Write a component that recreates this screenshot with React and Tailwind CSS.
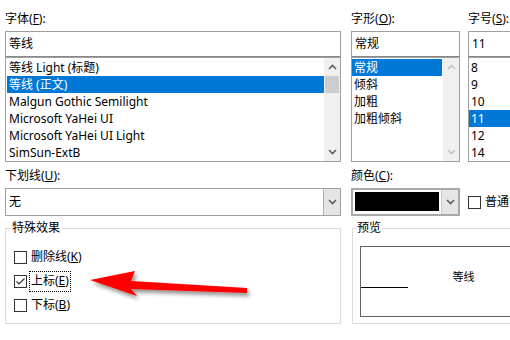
const fontList = [
	"等线 Light (标题)",
	"等线 (正文)",
	"Malgun Gothic Semilight",
	"Microsoft YaHei UI",
	"Microsoft YaHei UI Light",
	"SimSun-ExtB",
];
const styleList = ["常规", "倾斜", "加粗", "加粗倾斜"];
const sizeList = ["8", "9", "10", "11", "12", "14"];

function Chevron({ up = false, color = "#606060" }) {
	return (
		<svg width="9" height="6" viewBox="0 0 9 6">
			<polyline
				points={up ? "1,5 4.5,1.5 8,5" : "1,1 4.5,4.5 8,1"}
				fill="none"
				stroke={color}
				strokeWidth="1.6"
			/>
		</svg>
	);
}

function Scrollbar({ active }) {
	const color = active ? "#606060" : "#c2c2c2";
	return (
		<div className="w-[16px] bg-[#f0f0f0] flex flex-col">
			<div className="h-[18px] flex items-center justify-center">
				<Chevron up color={color} />
			</div>
			{active && <div className="h-[17px] mx-[1px] bg-[#cdcdcd]" />}
			<div className="flex-1" />
			<div className="h-[18px] flex items-center justify-center">
				<Chevron color={color} />
			</div>
		</div>
	);
}

function Label({ text, k }) {
	return (
		<div className="h-[31px] pt-[12px] leading-[14px]">
			{text}(<u>{k}</u>):
		</div>
	);
}

function ListBox({ items, selected, scroll, pad = "pl-[1px]" }) {
	return (
		<div className="h-[105px] border border-[#a0a0a0] flex overflow-hidden">
			<div className={`flex-1 pt-[1px] ${pad}`}>
				{items.map((t, i) => (
					<div
						key={t}
						className={`h-[17px] leading-[17px] pl-[2px] whitespace-nowrap ${
							i === selected ? "bg-[#0078d7] text-white" : ""
						}`}
					>
						{t}
					</div>
				))}
			</div>
			{scroll !== undefined && <Scrollbar active={scroll} />}
		</div>
	);
}

function Check({ checked }) {
	return (
		<div className="w-[13px] h-[13px] border border-[#333] bg-white flex items-center justify-center shrink-0">
			{checked && (
				<svg width="11" height="11" viewBox="0 0 11 11">
					<polyline points="1.5,5.5 4,8 9.5,2.5" fill="none" stroke="#333" strokeWidth="1.2" />
				</svg>
			)}
		</div>
	);
}

export default function App() {
	return (
		<div className="relative w-[510px] h-[340px] overflow-hidden bg-white text-black text-[12px] font-['Noto_Sans','Noto_Sans_CJK_SC',sans-serif]">
			<div className="flex pl-[5px]">
				<div className="w-[336px] shrink-0">
					<Label text="字体" k="F" />
					<div className="h-[26px] border border-[#a0a0a0] border-b-[#888] flex items-center pl-[3px]">等线</div>
					<ListBox items={fontList} selected={1} scroll={true} />
				</div>
				<div className="w-[109px] ml-[10px] shrink-0">
					<Label text="字形" k="O" />
					<div className="h-[26px] border border-[#a0a0a0] border-b-[#888] flex items-center pl-[3px]">常规</div>
					<ListBox items={styleList} selected={0} scroll={false} pad="pl-0 pr-[1px]" />
				</div>
				<div className="w-[60px] ml-[8px] shrink-0">
					<Label text="字号" k="S" />
					<div className="h-[26px] border border-[#a0a0a0] border-b-[#888] flex items-center pl-[3px]">11</div>
					<ListBox items={sizeList} selected={3} pad="pl-0" />
				</div>
			</div>

			<div className="flex pl-[5px]">
				<div className="w-[336px] shrink-0">
					<div className="h-[26px] pt-[7px] leading-[14px]">
						下划线(<u>U</u>):
					</div>
					<div className="h-[28px] border border-[#a0a0a0] flex">
						<div className="flex-1 flex items-center pl-[3px]">无</div>
						<div className="w-[17px] bg-[#e5e5e5] border-l border-[#adadad] flex items-center justify-center">
							<Chevron />
						</div>
					</div>
				</div>
				<div className="w-[109px] ml-[10px] shrink-0">
					<div className="h-[26px] pt-[7px] leading-[14px]">
						颜色(<u>C</u>):
					</div>
					<div className="h-[28px] border-2 border-[#a9a9a9] flex bg-white">
						<div className="flex-1 pl-[2px] pt-[2px]">
							<div className="w-[84px] h-[19px] bg-black" />
						</div>
						<div className="w-[17px] bg-[#e5e5e5] border-l border-[#c8c8c8] flex items-center justify-center">
							<Chevron />
						</div>
					</div>
				</div>
				<div className="ml-[8px] pt-[26px] shrink-0">
					<div className="h-[28px] flex items-center gap-[4px] whitespace-nowrap">
						<Check />
						<span>普通</span>
					</div>
				</div>
			</div>

			<div className="flex pl-[5px] mt-[5px]">
				<fieldset className="w-[336px] h-[103px] border border-[#dcdcdc] shrink-0">
					<legend className="ml-[4px] px-[2px] leading-[14px]">特殊效果</legend>
					<div className="pt-[10px] pl-[8px]">
						<div className="h-[24px] flex items-center gap-[4px]">
							<Check />
							<span>
								删除线(<u>K</u>)
							</span>
						</div>
						<div className="h-[24px] flex items-center gap-[2px]">
							<Check checked />
							<span className="h-[21px] flex items-center px-[1px] border border-dotted border-black">
								上标(<u>E</u>)
							</span>
						</div>
						<div className="h-[24px] flex items-center gap-[4px]">
							<Check />
							<span>
								下标(<u>B</u>)
							</span>
						</div>
					</div>
				</fieldset>
				<fieldset className="w-[220px] h-[103px] ml-[11px] border border-[#dcdcdc] shrink-0">
					<legend className="ml-[3px] px-[1px] leading-[14px]">预览</legend>
					<div className="pt-[11px] pl-[7px]">
						<div className="relative w-[207px] h-[71px] border border-[#646464] flex items-center justify-center pb-[9px]">
							<div className="absolute left-0 top-[40px] w-[47px] h-[1px] bg-black" />
							<span className="text-[11px]">等线</span>
						</div>
					</div>
				</fieldset>
			</div>

			<svg className="absolute left-0 top-0 pointer-events-none" width="510" height="340">
				<defs>
					<filter id="sh" x="-20%" y="-50%" width="140%" height="200%">
						<feDropShadow dx="2" dy="3" stdDeviation="2" floodColor="#000" floodOpacity="0.45" />
					</filter>
				</defs>
				<polygon
					points="90,280 135,271 131,281 247,288 247,293 131,289 137,296"
					fill="#ff0000"
					strokeLinejoin="round"
					filter="url(#sh)"
				/>
			</svg>
		</div>
	);
}
